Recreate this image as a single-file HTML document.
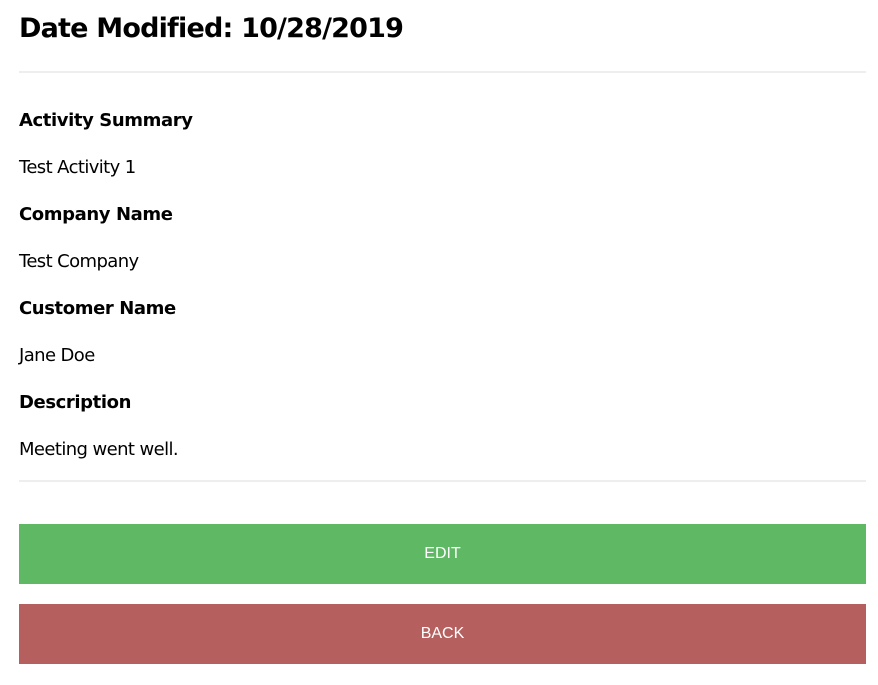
<!DOCTYPE html>
<html><head><meta charset="utf-8"><style>
body{margin:0;background:#fff;font-family:"DejaVu Sans","Liberation Sans",sans-serif;color:#000;}
.w{position:absolute;left:19px;width:847px;}
.h{top:9px;font-size:27px;font-weight:bold;line-height:40px;letter-spacing:-0.8px}
.hr{height:2px;background:#eee;}
.l{font-size:18px;font-weight:bold;line-height:24px;letter-spacing:-0.4px}
.v{font-size:18px;line-height:24px;letter-spacing:-0.6px;font-weight:normal}
.b{height:60px;color:#fff;font-family:"Liberation Sans",sans-serif;font-size:16px;display:flex;align-items:center;justify-content:center}
</style></head><body>
<div class="w h">Date Modified: 10/28/2019</div>
<div class="w hr" style="top:71px"></div>
<div class="w l" style="top:109px">Activity Summary</div>
<div class="w v" style="top:156px">Test Activity 1</div>
<div class="w l" style="top:203px">Company Name</div>
<div class="w v" style="top:250px">Test Company</div>
<div class="w l" style="top:297px">Customer Name</div>
<div class="w v" style="top:344px">Jane Doe</div>
<div class="w l" style="top:391px">Description</div>
<div class="w v" style="top:438px">Meeting went well.</div>
<div class="w hr" style="top:480px"></div>
<div class="w b" style="top:524px;background:#5fb863">EDIT</div>
<div class="w b" style="top:604px;background:#b55f5f">BACK</div>
</body></html>
